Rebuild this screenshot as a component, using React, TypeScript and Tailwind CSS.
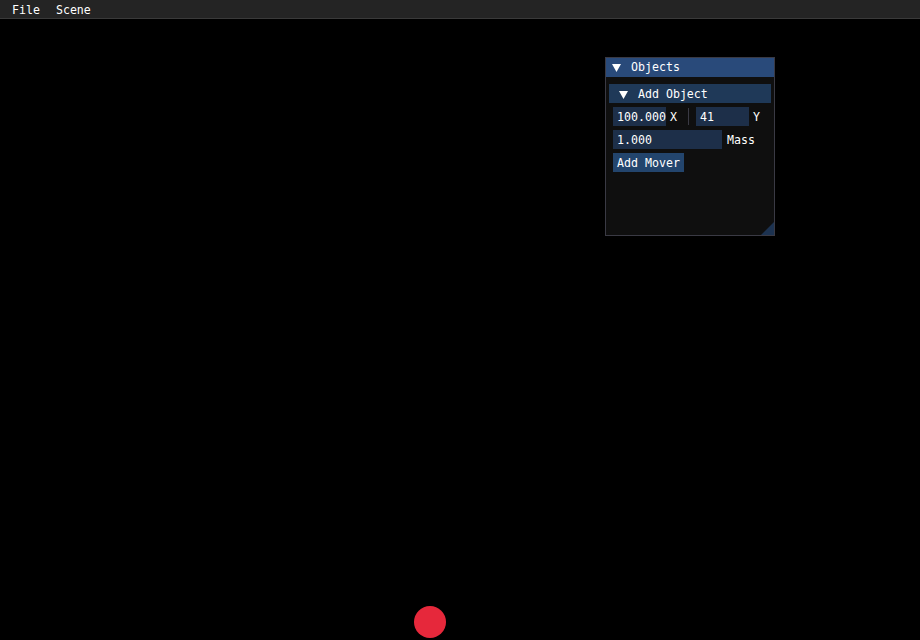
const mono = "font-['DejaVu_Sans_Mono',monospace] text-[11.6px] leading-none";

function Caret() {
  return (
    <svg width="9" height="8" viewBox="0 0 9 8" className="shrink-0">
      <polygon points="0,0 9,0 4.5,8" fill="#ffffff" />
    </svg>
  );
}

function Field({ value, width }: { value: string; width: string }) {
  return (
    <div className={`flex h-[19px] items-center bg-[#1d2f49] pl-[4px] pt-[2px] text-white ${width}`}>
      {value}
    </div>
  );
}

function ObjectsWindow() {
  return (
    <div className={`absolute left-[605px] top-[38px] flex h-[179px] w-[170px] flex-col border border-[#3a3a44] bg-[#0f0f0f] ${mono}`}>
      <div className="flex h-[19px] shrink-0 items-center gap-[10px] bg-[#294a7a] pl-[6px] text-white">
        <Caret />
        <span>Objects</span>
      </div>
      <div className="flex flex-col gap-[4px] px-[3px] pt-[7px]">
        <div className="flex h-[19px] items-center gap-[10px] bg-[#1f3958] pl-[10px] pt-[2px] text-white">
          <Caret />
          <span>Add Object</span>
        </div>
        <div className="flex items-center px-[4px] text-white">
          <Field value="100.000" width="w-[53px]" />
          <span className="ml-[4px] pt-[2px]">X</span>
          <div className="ml-[11px] h-[17px] w-px bg-[#3a3a44]" />
          <div className="ml-[7px]">
            <Field value="41" width="w-[53px]" />
          </div>
          <span className="ml-[4px] pt-[2px]">Y</span>
        </div>
        <div className="flex items-center px-[4px] text-white">
          <Field value="1.000" width="w-[109px]" />
          <span className="ml-[5px] pt-[2px]">Mass</span>
        </div>
        <div className="flex px-[4px]">
          <button className="flex h-[19px] w-[71px] items-center justify-center bg-[#23456d] pt-[2px] text-white">
            Add Mover
          </button>
        </div>
      </div>
      <svg width="13" height="13" viewBox="0 0 13 13" className="absolute bottom-0 right-0">
        <polygon points="13,0 13,13 0,13" fill="#1c3250" />
      </svg>
    </div>
  );
}

export default function App() {
  return (
    <div className="flex h-[640px] w-[920px] flex-col overflow-hidden bg-black">
      <div className={`flex h-[19px] shrink-0 items-center gap-[16px] border-b border-[#3a3a3a] bg-[#242424] pl-[12px] pt-[4px] text-white ${mono}`}>
        <span>File</span>
        <span>Scene</span>
      </div>
      <div className="relative flex-1">
        <ObjectsWindow />
        <div className="absolute left-[414px] top-[587px] h-[32px] w-[32px] rounded-full bg-[#e6283b]" />
      </div>
    </div>
  );
}
